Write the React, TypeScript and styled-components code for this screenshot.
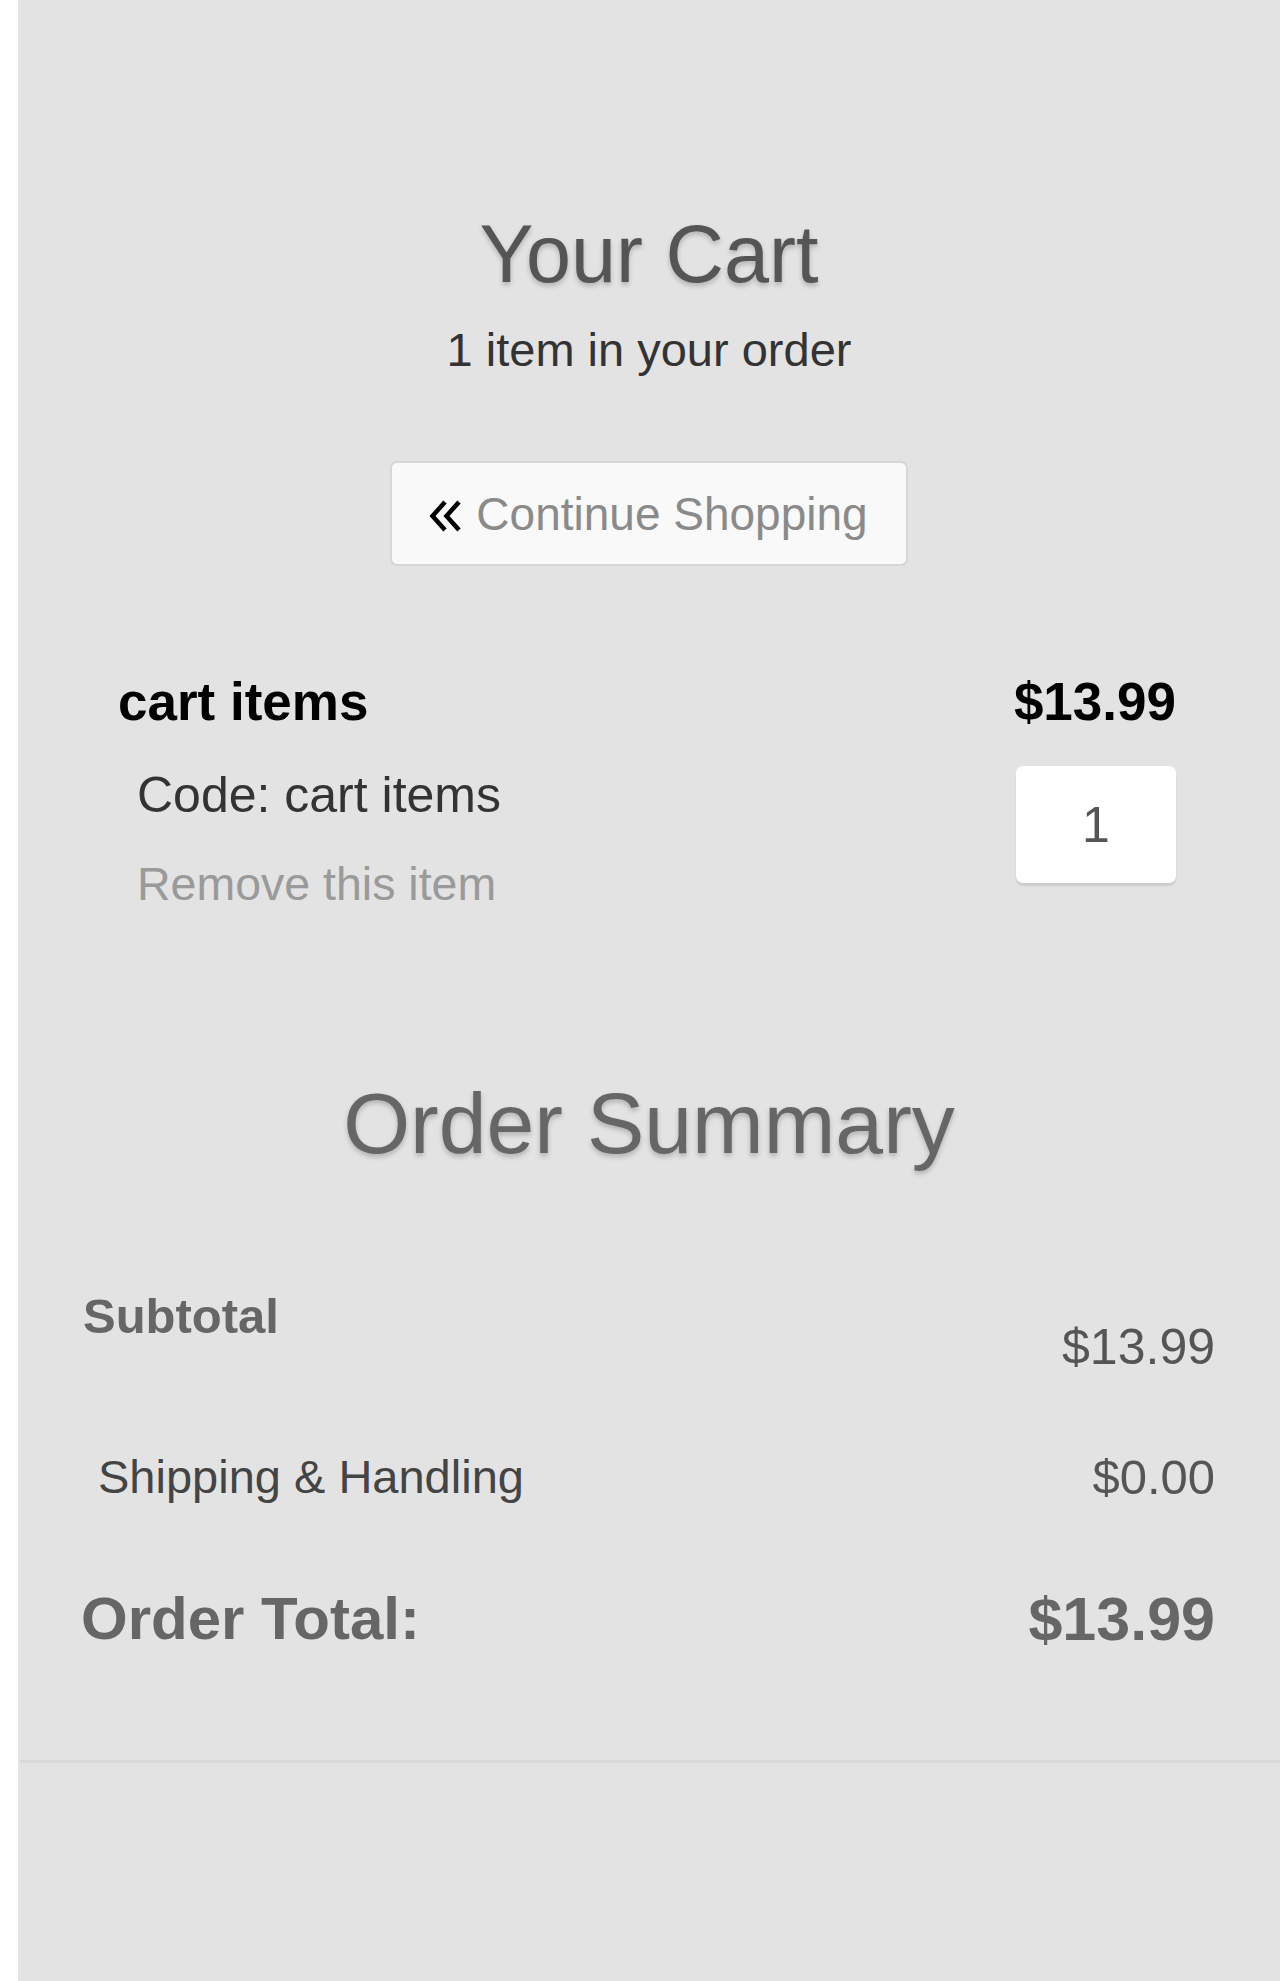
import React from 'react';
import styled, { createGlobalStyle } from 'styled-components';

const GlobalStyle = createGlobalStyle`
    html, body {
        margin: 0;
        padding: 0;
        background: #ffffff;
    }
    body {
        font-family: 'Liberation Sans', Arial, Helvetica, sans-serif;
    }
`;

const Page = styled.div`
    margin-left: 18px;
    min-height: 1981px;
    background: #e3e3e3;
    display: flex;
    flex-direction: column;
`;

const Header = styled.header`
    display: flex;
    flex-direction: column;
    align-items: center;
    padding-top: 210px;
`;

const Title = styled.h1<{ $size: number; $color: string }>`
    margin: 0;
    font-weight: normal;
    font-size: ${(p) => p.$size}px;
    line-height: ${(p) => p.$size + 8}px;
    color: ${(p) => p.$color};
    text-align: center;
    text-shadow: 0 3px 5px rgba(0, 0, 0, 0.22);
`;

const Count = styled.p`
    margin: 23px 0 0;
    font-size: 47px;
    line-height: 56px;
    color: #333;
`;

const ContinueButton = styled.button`
    margin-top: 83px;
    height: 105px;
    padding: 0 38px 0 37px;
    display: flex;
    align-items: center;
    gap: 14px;
    background: #f9f9f9;
    border: 2px solid #d6d6d6;
    border-radius: 7px;
    font-family: inherit;
    font-size: 46px;
    color: #8a8a8a;
    cursor: pointer;

    svg {
        width: 33px;
        height: 32px;
        margin-top: 4px;
    }
`;

const ItemSection = styled.section`
    margin-top: 105px;
    padding: 0 104px 0 100px;
    display: flex;
    flex-direction: column;
`;

const ItemHead = styled.div`
    display: flex;
    justify-content: space-between;
    align-items: center;
    height: 60px;
    font-size: 53px;
    font-weight: bold;
    color: #000;
`;

const ItemBody = styled.div`
    margin-top: 34px;
    display: flex;
    justify-content: space-between;
    align-items: flex-start;
`;

const ItemInfo = styled.div`
    padding-left: 19px;
    display: flex;
    flex-direction: column;
    gap: 29px;
`;

const InfoLine = styled.div<{ $muted?: boolean }>`
    font-size: ${(p) => (p.$muted ? 46.5 : 50)}px;
    line-height: 60px;
    color: ${(p) => (p.$muted ? '#9a9a9a' : '#333')};
`;

const QtyInput = styled.input`
    width: 160px;
    height: 117px;
    box-sizing: border-box;
    margin-top: 1px;
    border: none;
    border-radius: 7px;
    background: #fff;
    box-shadow: 0 3px 2px rgba(0, 0, 0, 0.1);
    text-align: center;
    font-family: inherit;
    font-size: 50px;
    color: #555;
    outline: none;
`;

const Summary = styled.section`
    margin-top: 162px;
    display: flex;
    flex-direction: column;
`;

const SummaryTable = styled.div`
    margin-top: 118px;
    padding: 0 65px 0 63px;
    display: flex;
    flex-direction: column;
`;

const Row = styled.div<{ $gap: number }>`
    display: flex;
    justify-content: space-between;
    align-items: flex-start;
    margin-top: ${(p) => p.$gap}px;
`;

const Label = styled.div<{ $size: number; $bold?: boolean; $indent?: number }>`
    font-size: ${(p) => p.$size}px;
    line-height: ${(p) => p.$size + 8}px;
    font-weight: ${(p) => (p.$bold ? 'bold' : 'normal')};
    color: ${(p) => (p.$bold ? '#666' : '#444')};
    padding-left: ${(p) => p.$indent ?? 0}px;
`;

const Value = styled.div<{ $size: number; $bold?: boolean; $drop?: number }>`
    font-size: ${(p) => p.$size}px;
    line-height: ${(p) => p.$size + 8}px;
    font-weight: ${(p) => (p.$bold ? 'bold' : 'normal')};
    color: ${(p) => (p.$bold ? '#666' : '#555')};
    padding-top: ${(p) => p.$drop ?? 0}px;
`;

const Divider = styled.hr`
    margin: 106px 0 0 2px;
    border: none;
    border-top: 3px solid #dadada;
`;

// double angle, thinner than the font-awesome one
const DoubleAngle = () => (
    <svg viewBox='0 0 33 32' fill='none' stroke='#000' strokeWidth='4.5' strokeLinejoin='miter'>
        <polyline points='16,2 3.5,16 16,30' />
        <polyline points='30,2 17.5,16 30,30' />
    </svg>
);

export default function App() {
    return (
        <>
            <GlobalStyle />
            <Page>
                <Header>
                    <Title $size={81} $color='#555'>Your Cart</Title>
                    <Count>1 item in your order</Count>
                    <ContinueButton type='button'>
                        <DoubleAngle />
                        Continue Shopping
                    </ContinueButton>
                </Header>

                <ItemSection>
                    <ItemHead>
                        <span>cart items</span>
                        <span>$13.99</span>
                    </ItemHead>
                    <ItemBody>
                        <ItemInfo>
                            <InfoLine>Code: cart items</InfoLine>
                            <InfoLine $muted>Remove this item</InfoLine>
                        </ItemInfo>
                        <QtyInput type='text' defaultValue='1' />
                    </ItemBody>
                </ItemSection>

                <Summary>
                    <Title $size={86} $color='#666'>Order Summary</Title>
                    <SummaryTable>
                        <Row $gap={0}>
                            <Label $size={49} $bold $indent={2}>Subtotal</Label>
                            <Value $size={50} $drop={30}>$13.99</Value>
                        </Row>
                        <Row $gap={73}>
                            <Label $size={47} $indent={17}>Shipping &amp; Handling</Label>
                            <Value $size={49}>$0.00</Value>
                        </Row>
                        <Row $gap={79}>
                            <Label $size={60} $bold>Order Total:</Label>
                            <Value $size={61} $bold>$13.99</Value>
                        </Row>
                    </SummaryTable>
                    <Divider />
                </Summary>
            </Page>
        </>
    );
}
